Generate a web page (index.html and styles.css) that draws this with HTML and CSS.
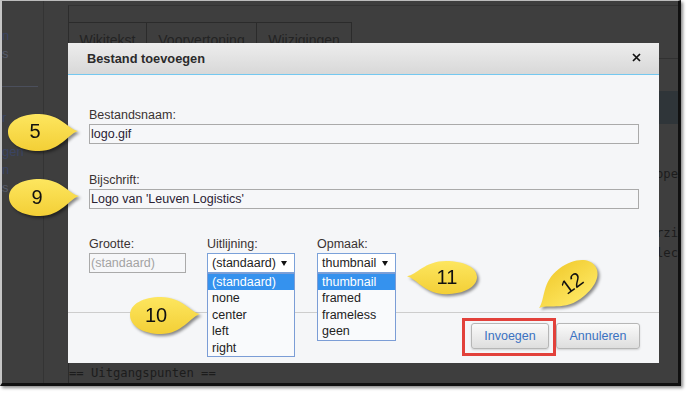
FILE: index.html
```html
<!DOCTYPE html>
<html lang="nl">
<head>
<meta charset="utf-8">
<title>Bestand toevoegen</title>
<link rel="stylesheet" href="styles.css">
</head>
<body>
<div class="frame">
  <aside class="sidebar">
    <span class="sl">n</span>
    <span class="sl v">s</span>
    <div class="sdiv"></div>
    <span class="sl">r</span>
    <span class="sl gap">gen</span>
    <span class="sl">n</span>
    <span class="sl v">s</span>
  </aside>
  <main class="main">
    <div class="content">
      <div class="tabbar">
        <div class="tab t1">Wikitekst</div>
        <div class="tab t2">Voorvertoning</div>
        <div class="tab t3">Wijzigingen</div>
      </div>
      <div class="toolbar"></div>
      <div class="editor">
        <div class="ln">[[Bestand:logo.gif|thumb|Logo van 'Leuven Logistics']]</div>
        <div class="ln"></div>
        <div class="ln"><span class="pad">Leuven Logistics is een logistiek bedrijf dat zich richt op het </span>operationeel</div>
        <div class="ln">beheer van goederenstromen.</div>
        <div class="ln"></div>
        <div class="ln"><span class="pad">Deze pagina geeft een ove</span>rzicht</div>
        <div class="ln"><span class="pad">van de projecten, de werkwijze en de se</span>lectie</div>
        <div class="ln"></div>
        <div class="ln"></div>
        <div class="ln"></div>
        <div class="ln"></div>
        <div class="ln"></div>
        <div class="ln">== Uitgangspunten ==</div>
      </div>
    </div>
  </main>
</div>

<div class="dialog">
  <div class="dlg-head">
    <span class="dlg-title">Bestand toevoegen</span>
    <svg class="close" viewBox="0 0 9 9"><path d="M1 1L8 8M8 1L1 8" stroke="#111" stroke-width="1.7" fill="none"/></svg>
  </div>
  <div class="dlg-body">
    <div class="lbl">Bestandsnaam:</div>
    <div class="field">logo.gif</div>
    <div class="lbl lbl2">Bijschrift:</div>
    <div class="field">Logo van 'Leuven Logistics'</div>
    <div class="row3">
      <div class="col col-size">
        <div class="lbl">Grootte:</div>
        <div class="field size placeholder">(standaard)</div>
      </div>
      <div class="col col-align">
        <div class="lbl">Uitlijning:</div>
        <div class="select">
          <span>(standaard)</span><span class="arrow"></span>
          <ul class="options">
            <li class="sel">(standaard)</li>
            <li>none</li>
            <li>center</li>
            <li>left</li>
            <li>right</li>
          </ul>
        </div>
      </div>
      <div class="col col-fmt">
        <div class="lbl">Opmaak:</div>
        <div class="select">
          <span>thumbnail</span><span class="arrow"></span>
          <ul class="options">
            <li class="sel">thumbnail</li>
            <li>framed</li>
            <li>frameless</li>
            <li>geen</li>
          </ul>
        </div>
      </div>
    </div>
  </div>
  <div class="dlg-foot">
    <button class="btn b1">Invoegen</button>
    <button class="btn b2">Annuleren</button>
  </div>
</div>

<div class="redbox"></div>

<svg class="callout c5" viewBox="0 0 78 44">
  <defs><linearGradient id="g5" x1="0" y1="0" x2="0" y2="1"><stop offset="0" stop-color="#fde65f"/><stop offset="1" stop-color="#f3cf36"/></linearGradient></defs>
  <path d="M72,18 C62,16 54,1 33,1 C15,1 2,8 2,19 C2,30 15,38 33,38 C54,38 62,21 72,18 Z" fill="url(#g5)"/>
  <text x="29" y="25" class="ct">5</text>
</svg>
<svg class="callout c9" viewBox="0 0 78 44">
  <defs><linearGradient id="g9" x1="0" y1="0" x2="0" y2="1"><stop offset="0" stop-color="#fde65f"/><stop offset="1" stop-color="#f3cf36"/></linearGradient></defs>
  <path d="M72,18 C62,16 54,1 33,1 C15,1 2,8 2,19 C2,30 15,38 33,38 C54,38 62,21 72,18 Z" fill="url(#g9)"/>
  <text x="30" y="26" class="ct">9</text>
</svg>
<svg class="callout c10" viewBox="0 0 78 44">
  <defs><linearGradient id="g10" x1="0" y1="0" x2="0" y2="1"><stop offset="0" stop-color="#fde65f"/><stop offset="1" stop-color="#f3cf36"/></linearGradient></defs>
  <path d="M72,18 C62,16 54,1 33,1 C15,1 2,8 2,19 C2,30 15,38 33,38 C54,38 62,21 72,18 Z" fill="url(#g10)"/>
  <text x="28" y="26" class="ct">10</text>
</svg>
<svg class="callout c11" viewBox="0 0 78 44">
  <defs><linearGradient id="g11" x1="0" y1="0" x2="0" y2="1"><stop offset="0" stop-color="#fde65f"/><stop offset="1" stop-color="#f3cf36"/></linearGradient></defs>
  <path transform="translate(74,0) scale(-1,0.9)" d="M72,18 C62,16 54,1 33,1 C15,1 2,8 2,19 C2,30 15,38 33,38 C54,38 62,21 72,18 Z" fill="url(#g11)"/>
  <text x="42" y="24" class="ct">11</text>
</svg>
<svg class="callout c12" viewBox="0 0 95 70">
  <defs><linearGradient id="g12" x1="0" y1="0" x2="0" y2="1"><stop offset="0" stop-color="#fde65f"/><stop offset="1" stop-color="#f3cf36"/></linearGradient></defs>
  <path transform="translate(19,58) rotate(144) translate(-72,-18)" d="M72,18 C62,16 54,1 33,1 C15,1 2,8 2,19 C2,30 15,38 33,38 C54,38 62,21 72,18 Z" fill="url(#g12)"/>
  <text transform="translate(52,33) rotate(-36)" x="0" y="7" class="ct">12</text>
</svg>
</body>
</html>
```

FILE: styles.css
```css
* { box-sizing: border-box; }
html, body { margin: 0; padding: 0; }
body {
  position: relative;
  width: 689px;
  height: 396px;
  overflow: hidden;
  background: #ffffff;
  font-family: "Liberation Sans", Arial, sans-serif;
}

/* background (dimmed) page */
.frame {
  width: 681px;
  height: 386px;
  display: flex;
  overflow: hidden;
  background: #3e3e3e;
  border-top: 1px solid #bcbcbc;
  border-left: 2px solid #c6c6c6;
  border-right: 3px solid #101010;
  border-bottom: 3px solid #101010;
  box-shadow: 2px 2px 3px rgba(0, 0, 0, 0.45);
}
.sidebar {
  width: 42px;
  flex: none;
  border-right: 1px solid #343434;
  padding-top: 26px;
  font-size: 13px;
  overflow: hidden;
}
.sl {
  display: block;
  line-height: 18px;
  color: #3a4462;
  white-space: nowrap;
}
.sl.v { color: #555a69; }
.sl.gap { margin-top: 16px; }
.sdiv {
  height: 1px;
  background: #4b4f5c;
  margin: 23px 5px 22px 0;
}
.main {
  flex: 1;
  min-width: 0;
  padding-left: 24px;
}
.content {
  margin-top: 4px;
  height: calc(100% - 4px);
  border-top: 1px solid #333333;
  border-left: 1px solid #2c2c2c;
  overflow: hidden;
}
.tabbar {
  margin-top: 16px;
  display: flex;
  border-bottom: 1px solid #313131;
}
.tab {
  height: 36px;
  border-top: 1px solid #2b2b2b;
  border-right: 1px solid #2b2b2b;
  text-align: center;
  line-height: 35px;
  font-size: 14px;
  color: #232323;
}
.t1 { width: 78px; }
.t2 { width: 110px; }
.t3 { width: 95px; }
.toolbar {
  margin-top: 32px;
  height: 33px;
  background: #2f3539;
}
.editor {
  padding-top: 1px;
  font-family: "DejaVu Sans Mono", "Liberation Mono", monospace;
  font-size: 12.2px;
  line-height: 19.9px;
  color: #1c1c1c;
}
.ln {
  height: 19.9px;
  white-space: pre;
}
.pad {
  display: inline-block;
  width: 80ch;
  overflow: hidden;
  vertical-align: top;
}

/* dialog */
.dialog {
  position: absolute;
  left: 68px;
  top: 43px;
  width: 591px;
  height: 320px;
  background: #f5f6f8;
  color: #333;
}
.dlg-head {
  height: 32px;
  border-bottom: 1px solid #74c8f0;
  background: linear-gradient(#ededed, #d8d8d8);
  display: flex;
  align-items: center;
  justify-content: space-between;
  padding: 0 18px 0 19px;
}
.dlg-title {
  font-weight: bold;
  font-size: 12.8px;
  color: #2b2b2b;
}
.close {
  width: 9px;
  height: 9px;
  margin-top: -3px;
}
.dlg-body {
  height: 238px;
  border-bottom: 1px solid #cdcdcd;
  padding: 32px 20px 0 21px;
}
.lbl {
  font-size: 12.5px;
  line-height: 16px;
  margin-bottom: 1px;
  color: #3a3232;
}
.lbl2 { margin-top: 28px; }
.field {
  height: 20px;
  border: 1px solid #aaaaaa;
  padding: 0 1px;
  font-size: 12.5px;
  line-height: 18px;
  color: #2a2233;
  background: #f6f7f9;
  white-space: nowrap;
}
.row3 {
  margin-top: 27px;
  display: flex;
}
.col-size { width: 97px; margin-right: 21px; }
.col-align { width: 88px; margin-right: 22px; }
.col-fmt { width: 79px; }
.field.size { margin-top: 1px; }
.placeholder { color: #a3a3a3; }
.select {
  position: relative;
  height: 20px;
  border: 1px solid #7ba1d9;
  background: #ffffff;
  display: flex;
  align-items: center;
  justify-content: space-between;
  padding: 0 7px 0 4px;
  font-size: 12.5px;
  color: #222;
}
.arrow {
  width: 0;
  height: 0;
  border-left: 3px solid transparent;
  border-right: 3px solid transparent;
  border-top: 5px solid #111;
}
.options {
  position: absolute;
  left: -1px;
  top: calc(100% + 1px);
  width: calc(100% + 2px);
  margin: 0;
  padding: 0;
  list-style: none;
  border: 1px solid #7b9dd6;
  background: #f9fafc;
  z-index: 2;
}
.options li {
  height: 16.4px;
  line-height: 16.4px;
  padding-left: 4px;
  font-size: 12.5px;
  color: #222;
}
.options li.sel {
  background: #3592ee;
  color: #fff;
}
.dlg-foot {
  display: flex;
  justify-content: flex-end;
  gap: 7px;
  padding: 10px 19px 0 0;
}
.btn {
  height: 26px;
  padding: 0;
  border: 1px solid #b6b6b6;
  border-radius: 3px;
  background: linear-gradient(#fafafa, #dedede);
  color: #3b72c2;
  font-family: "Liberation Sans", Arial, sans-serif;
  font-size: 12.5px;
  box-shadow: 0 1px 2px rgba(0, 0, 0, 0.15);
}
.b1 { width: 78px; }
.b2 { width: 84px; }

/* annotations */
.redbox {
  position: absolute;
  left: 462px;
  top: 318px;
  width: 94px;
  height: 38px;
  border: 3px solid #e2413b;
}
.callout {
  position: absolute;
  overflow: visible;
  filter: drop-shadow(2px 2px 1.5px rgba(0, 0, 0, 0.45));
}
.ct {
  font-family: "Liberation Sans", Arial, sans-serif;
  font-size: 20px;
  fill: #111;
  text-anchor: middle;
}
.c5 { left: 6px; top: 113px; width: 78px; height: 44px; }
.c9 { left: 7px; top: 178px; width: 78px; height: 44px; }
.c10 { left: 128px; top: 296px; width: 78px; height: 44px; }
.c11 { left: 405px; top: 260px; width: 78px; height: 44px; }
.c12 { left: 520px; top: 250px; width: 95px; height: 70px; }
```
